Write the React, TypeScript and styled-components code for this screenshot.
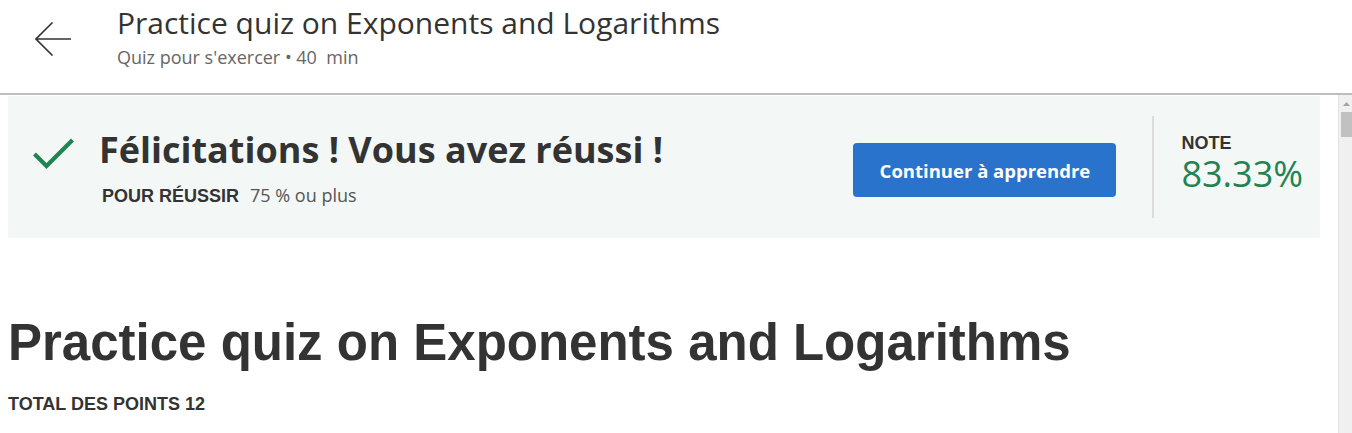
import React from 'react';
import styled, { createGlobalStyle } from 'styled-components';

const GlobalStyle = createGlobalStyle`
  html, body {
    margin: 0;
    padding: 0;
    height: 100%;
    overflow: hidden;
    background: #fff;
  }
  #root {
    height: 100%;
  }
`;

const Page = styled.div`
  height: 100vh;
  display: flex;
  flex-direction: column;
  color: #333;
`;

const Header = styled.header`
  height: 95px;
  flex: none;
  display: flex;
  align-items: flex-start;
  border-bottom: 2px solid #bdbdbd;
  box-sizing: border-box;
`;

const BackButton = styled.button`
  width: 36px;
  height: 34px;
  margin: 22px 46px 0 35px;
  padding: 0;
  border: none;
  background: none;
  display: flex;
  cursor: pointer;
`;

const HeaderText = styled.div`
  display: flex;
  flex-direction: column;
  padding-top: 5px;
`;

const HeaderTitle = styled.h1`
  margin: 0 0 5px;
  font-family: 'Open Sans', sans-serif;
  font-weight: 400;
  font-size: 30px;
  line-height: 36px;
  color: #333;
`;

const HeaderSub = styled.div`
  font-family: 'Open Sans', sans-serif;
  font-size: 18px;
  line-height: 22px;
  color: #666;
  white-space: pre;
`;

const Body = styled.div`
  flex: 1;
  display: flex;
  min-height: 0;
`;

const Scroller = styled.main`
  flex: 1;
  overflow: hidden;
`;

const Content = styled.div`
  padding: 1px 18px 0 8px;
`;

const ScrollRail = styled.div`
  width: 13px;
  flex: none;
  background: #f0f0f0;
  border-left: 1px solid #e3e3e3;
  display: flex;
  flex-direction: column;
`;

const ScrollUp = styled.div`
  height: 17px;
  display: flex;
  align-items: center;
  justify-content: center;
  padding-left: 1px;
`;

const ScrollThumb = styled.div`
  height: 25px;
  margin-left: 2px;
  background: #c1c1c1;
`;

const Banner = styled.section`
  height: 142px;
  background: #f3f8f6;
  display: flex;
  align-items: flex-start;
  padding: 0 17px 0 25px;
  box-sizing: border-box;
`;

const CheckWrap = styled.div`
  width: 41px;
  height: 31px;
  margin: 42px 25px 0 0;
  display: flex;
`;

const Summary = styled.div`
  flex: 1;
  display: flex;
  flex-direction: column;
  margin-top: 32px;
`;

const Congrats = styled.h2`
  margin: 0 0 11px;
  font-family: 'Open Sans', sans-serif;
  font-weight: 700;
  font-size: 36px;
  line-height: 44px;
  color: #333;
`;

const PassRow = styled.div`
  display: flex;
  align-items: baseline;
  gap: 11px;
  padding-left: 3px;
`;

const Caps = styled.span`
  font-family: 'Liberation Sans', Arial, sans-serif;
  font-weight: 700;
  font-size: 18px;
  line-height: 21px;
  color: #333;
`;

const PassValue = styled.span`
  font-family: 'Open Sans', sans-serif;
  font-size: 18px;
  color: #555;
`;

const PrimaryButton = styled.button`
  width: 263px;
  height: 54px;
  margin-top: 47px;
  border: none;
  border-radius: 4px;
  background: #2a73cc;
  color: #fff;
  font-family: 'Open Sans', sans-serif;
  font-weight: 700;
  font-size: 18.5px;
  cursor: pointer;
`;

const Divider = styled.div`
  width: 2px;
  align-self: stretch;
  margin: 20px 27px 20px 36px;
  background: #dcdcdc;
`;

const Score = styled.div`
  display: flex;
  flex-direction: column;
  margin-top: 37px;
`;

const ScoreValue = styled.div`
  font-family: 'Open Sans', sans-serif;
  font-size: 36px;
  line-height: 40px;
  color: #1f8354;
`;

const QuizTitle = styled.h1`
  margin: 75px 0 0;
  font-family: 'Liberation Sans', Arial, sans-serif;
  font-weight: 700;
  font-size: 51px;
  line-height: 60px;
  color: #333;
`;

const Points = styled.div`
  margin-top: 21px;
`;

const ArrowLeft = () => (
  <svg width="36" height="34" viewBox="0 0 36 34" fill="none" stroke="#333" strokeWidth="1.6">
    <path d="M1 17H36M17.5 0.5L1 17L17.5 33.5" />
  </svg>
);

const Check = () => (
  <svg width="41" height="31" viewBox="0 0 41 31" fill="none" stroke="#1f8354" strokeWidth="4.2">
    <path d="M1.5 16L13.5 28L39.5 2" />
  </svg>
);

const RailArrow = () => (
  <svg width="7" height="4" viewBox="0 0 7 4">
    <path d="M0 4L3.5 0L7 4Z" fill="#a3a3a3" />
  </svg>
);

export default function App() {
  return (
    <Page>
      <GlobalStyle />
      <Header>
        <BackButton aria-label="Retour">
          <ArrowLeft />
        </BackButton>
        <HeaderText>
          <HeaderTitle>Practice quiz on Exponents and Logarithms</HeaderTitle>
          <HeaderSub>Quiz pour s'exercer • 40  min</HeaderSub>
        </HeaderText>
      </Header>
      <Body>
        <Scroller>
          <Content>
            <Banner>
              <CheckWrap>
                <Check />
              </CheckWrap>
              <Summary>
                <Congrats>Félicitations ! Vous avez réussi !</Congrats>
                <PassRow>
                  <Caps>POUR RÉUSSIR</Caps>
                  <PassValue>75 % ou plus</PassValue>
                </PassRow>
              </Summary>
              <PrimaryButton>Continuer à apprendre</PrimaryButton>
              <Divider />
              <Score>
                <Caps>NOTE</Caps>
                <ScoreValue>83.33%</ScoreValue>
              </Score>
            </Banner>
            <QuizTitle>Practice quiz on Exponents and Logarithms</QuizTitle>
            <Points>
              <Caps>TOTAL DES POINTS 12</Caps>
            </Points>
          </Content>
        </Scroller>
        <ScrollRail>
          <ScrollUp>
            <RailArrow />
          </ScrollUp>
          <ScrollThumb />
        </ScrollRail>
      </Body>
    </Page>
  );
}
